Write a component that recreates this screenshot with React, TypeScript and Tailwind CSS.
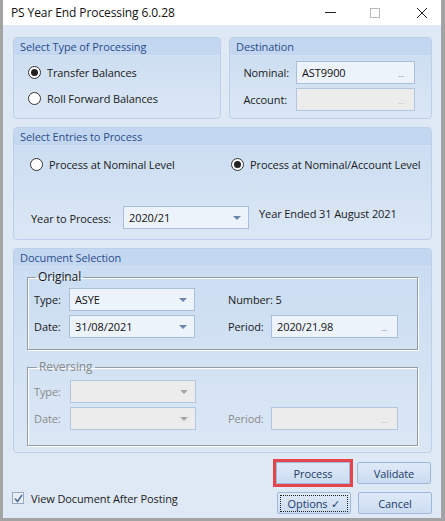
import React from "react";

const font = { fontFamily: '"Open Sans", "Noto Sans", Arial, sans-serif' };

const Radio = ({ checked, label }: { checked?: boolean; label: string }) => (
  <div className="flex items-center gap-[6px]">
    <span className="w-[13px] h-[13px] rounded-full border border-[#333] bg-white flex items-center justify-center">
      {checked && <span className="w-[7px] h-[7px] rounded-full bg-[#222]" />}
    </span>
    <span className="text-[#1b1b1b]">{label}</span>
  </div>
);

const Group = ({
  title,
  className,
  children,
}: {
  title: string;
  className?: string;
  children: React.ReactNode;
}) => (
  <div
    className={`rounded-[4px] border border-[#bcd0ea] bg-gradient-to-b from-[#c9dcf1] to-[#dbe7f5] flex flex-col ${className ?? ""}`}
  >
    <div className="h-[18px] bg-[#c3d8f0] rounded-t-[4px] px-[6px] flex items-center text-[#2c4c8c] border-b border-[#d2e1f3]">
      {title}
    </div>
    {children}
  </div>
);

const Select = ({ value, disabled, w = 126 }: { value?: string; disabled?: boolean; w?: number }) => (
  <div
    className={`h-[23px] border flex items-center justify-between px-[5px] ${
      disabled ? "bg-[#ececec] border-[#b3c6df]" : "bg-[#edf3fb] border-[#a9bedb]"
    }`}
    style={{ width: w }}
  >
    <span className="text-[#111]">{value ?? ""}</span>
    <span
      className={`w-0 h-0 border-l-[4px] border-r-[4px] border-t-[4px] border-l-transparent border-r-transparent mr-[2px] ${
        disabled ? "border-t-[#a8a8a8]" : "border-t-[#6a86ad]"
      }`}
    />
  </div>
);

const Lookup = ({ value, disabled, w }: { value?: string; disabled?: boolean; w: number }) => (
  <div
    className={`h-[23px] border flex items-center justify-between px-[5px] ${
      disabled ? "bg-[#ececec] border-[#b3c6df]" : "bg-[#edf3fb] border-[#a9bedb]"
    }`}
    style={{ width: w }}
  >
    <span className="text-[#111]">{value ?? ""}</span>
    <span className={`text-[8px] mr-[5px] mt-[3px] ${disabled ? "text-[#b5b5b5]" : "text-[#777]"}`}>...</span>
  </div>
);

const Button = ({ children, className }: { children: React.ReactNode; className?: string }) => (
  <div
    className={`w-[74px] h-[22px] border border-[#9fb8da] bg-gradient-to-b from-[#dfeaf8] to-[#cbdcf1] flex items-center justify-center text-[#233c6c] ${className ?? "rounded-[2px]"}`}
  >
    {children}
  </div>
);

export default function App() {
  return (
    <div
      className="w-[445px] h-[521px] bg-[#a3a3a3] pl-[3px] pr-[4px] pb-[3px] flex flex-col text-[11px] leading-none tracking-[-0.1px]"
      style={font}
    >
      {/* title bar */}
      <div className="h-[26px] bg-white flex items-center pl-[8px] pr-[10px]">
        <span className="text-[12px] text-[#111] flex-1">PS Year End Processing 6.0.28</span>
        <span className="w-[11px] h-[1px] bg-[#222] mr-[34px]" />
        <span className="w-[10px] h-[10px] border border-[#bbb] mr-[36px]" />
        <svg width="12" height="12" viewBox="0 0 12 12" className="mr-[3px]">
          <path d="M1 1 L11 11 M11 1 L1 11" stroke="#222" strokeWidth="1" />
        </svg>
      </div>

      {/* body */}
      <div className="flex-1 bg-[#dfe9f5] pl-[10px] pr-[9px] pt-[12px] flex flex-col gap-[8px]">
        <div className="flex gap-[8px] h-[82px]">
          <Group title="Select Type of Processing" className="w-[208px]">
            <div className="pl-[14px] pt-[10px] flex flex-col gap-[13px]">
              <Radio checked label="Transfer Balances" />
              <Radio label="Roll Forward Balances" />
            </div>
          </Group>
          <Group title="Destination" className="flex-1">
            <div className="pt-[5px] flex flex-col gap-[4px]">
              <div className="flex items-center">
                <span className="w-[59px] text-right text-[#1b1b1b]">Nominal:</span>
                <span className="ml-[7px]">
                  <Lookup value="AST9900" w={119} />
                </span>
              </div>
              <div className="flex items-center">
                <span className="w-[57px] text-right text-[#1b1b1b]">Account:</span>
                <span className="ml-[9px]">
                  <Lookup disabled w={119} />
                </span>
              </div>
            </div>
          </Group>
        </div>

        <Group title="Select Entries to Process" className="h-[113px]">
          <div className="flex pl-[16px] pt-[12px]">
            <div className="w-[201px]">
              <Radio label="Process at Nominal Level" />
            </div>
            <Radio checked label="Process at Nominal/Account Level" />
          </div>
          <div className="flex items-start pl-[17px] mt-[35px]">
            <span className="w-[92px] mt-[7px] text-[#1b1b1b]">Year to Process:</span>
            <Select value="2020/21" />
            <span className="ml-[10px] mt-[2px] text-[#1b1b1b]">Year Ended 31 August 2021</span>
          </div>
        </Group>

        <Group title="Document Selection" className="h-[205px]">
          <div className="px-[13px] flex flex-col">
            <fieldset className="border border-[#959ca6] shadow-[inset_1px_1px_0_#ffffff,1px_1px_0_#ffffff] pl-[6px] pb-[6px] mt-[4px] h-[79px]">
              <legend className="px-[2px] ml-[2px] text-[12px] text-[#1b1b1b]">Original</legend>
              <div className="flex flex-col gap-[4px] mt-[5px]">
                <div className="flex items-center">
                  <span className="w-[35px] text-[#1b1b1b]">Type:</span>
                  <Select value="ASYE" />
                  <span className="ml-[33px] text-[#1b1b1b]">Number: 5</span>
                </div>
                <div className="flex items-center">
                  <span className="w-[35px] text-[#1b1b1b]">Date:</span>
                  <Select value="31/08/2021" />
                  <span className="ml-[33px] w-[43px] text-[#1b1b1b]">Period:</span>
                  <Lookup value="2020/21.98" w={127} />
                </div>
              </div>
            </fieldset>
            <fieldset className="border border-[#959ca6] shadow-[inset_1px_1px_0_#ffffff,1px_1px_0_#ffffff] pl-[6px] pb-[6px] mt-[11px] h-[85px]">
              <legend className="px-[2px] ml-[3px] text-[12px] text-[#8a8a8a]">Reversing</legend>
              <div className="flex flex-col gap-[4px] mt-[7px]">
                <div className="flex items-center">
                  <span className="w-[36px] text-[#8a8a8a]">Type:</span>
                  <Select disabled />
                </div>
                <div className="flex items-center">
                  <span className="w-[36px] text-[#8a8a8a]">Date:</span>
                  <Select disabled />
                  <span className="ml-[32px] w-[43px] text-[#8a8a8a]">Period:</span>
                  <Lookup disabled w={127} />
                </div>
              </div>
            </fieldset>
          </div>
        </Group>

        <div className="flex items-end justify-between mt-[1px]">
          <div className="flex items-center gap-[7px] mb-[14px] -ml-[1px]">
            <span className="w-[12px] h-[12px] border border-[#97a9c4] bg-[#e8eef6] flex items-center justify-center">
              <svg width="9" height="9" viewBox="0 0 9 9">
                <path d="M1 4.5 L3.5 7.5 L8 1" stroke="#4d6a94" strokeWidth="1.5" fill="none" />
              </svg>
            </span>
            <span className="text-[#1b1b1b]">View Document After Posting</span>
          </div>
          <div className="grid grid-cols-2 gap-x-[6px] gap-y-[8px] mb-[4px]">
            <Button className="rounded-none outline outline-[3px] outline-[#e5444c]">Process</Button>
            <Button>Validate</Button>
            <Button className="rounded-[2px] ml-[1px]">
              <span className="border border-dotted border-[#222] w-[68px] h-[17px] flex items-center justify-center gap-[4px]">
                Options <span>✓</span>
              </span>
            </Button>
            <Button className="rounded-[2px] ml-[1px]">Cancel</Button>
          </div>
        </div>
      </div>
    </div>
  );
}
